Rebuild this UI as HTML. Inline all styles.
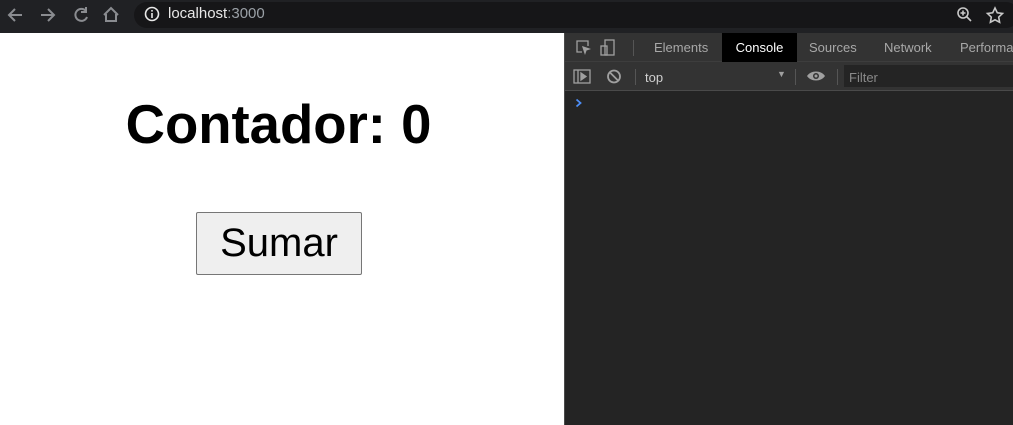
<!DOCTYPE html><html><head><style>
*{margin:0;padding:0;box-sizing:border-box}
body{width:1013px;height:425px;overflow:hidden;background:#fff;font-family:"Liberation Sans",sans-serif;position:relative}
.top{position:absolute;left:0;top:0;width:1013px;height:33px;background:#202124}
.pill{position:absolute;left:134px;top:2px;width:885px;height:26px;border-radius:13px;background:#161618}
.url{position:absolute;left:168px;top:5px;font-size:15px;color:#e8e8e8}
.url span{color:#9aa0a6}
.page{position:absolute;left:0;top:33px;width:564px;height:392px;background:#fff}
h1{position:absolute;left:0;width:557px;top:60px;text-align:center;font-size:54.5px;font-weight:bold;color:#000}
.btn{position:absolute;left:196px;top:179px;width:166px;height:63px;border:1px solid #767676;background:#efefef;font-size:40px;text-align:center;line-height:60px;border-radius:2px}
.dt{position:absolute;left:564px;top:33px;width:449px;height:392px;background:#242424;border-left:1px solid #4a4a4a}
.tabs{position:absolute;left:0;top:0;width:449px;height:29px;background:#333;border-bottom:1px solid #3d3d3d}
.tab{position:absolute;top:0;height:29px;line-height:29px;font-size:13px;color:#a8a8a8}
.tb{position:absolute;left:0;top:29px;width:449px;height:29px;background:#333;border-bottom:1px solid #4a4a4a}
</style></head><body>
<div class="top">
<svg style="position:absolute;left:0;top:0" width="130" height="33" fill="none" stroke="#8a8c90" stroke-width="2">
<path d="M22 15H9M15 9l-6 6 6 6"/><path d="M41 15h13M48 9l6 6-6 6"/>
<path d="M86 11a6 6 0 1 0 1 6M86 7v5h-5"/>
<path d="M104 15l7-7 7 7M106 14v7h10v-7"/></svg>
<div class="pill"></div>
<svg style="position:absolute;left:144px;top:6px" width="16" height="16"><circle cx="8" cy="8" r="6.5" fill="none" stroke="#e8e8e8" stroke-width="1.6"/><rect x="7.2" y="7" width="1.6" height="5" fill="#e8e8e8"/><rect x="7.2" y="4" width="1.6" height="1.6" fill="#e8e8e8"/></svg>
<div class="url">localhost<span>:3000</span></div>
<svg style="position:absolute;left:955px;top:6px" width="50" height="18" fill="none" stroke="#c8c8c8" stroke-width="1.6"><circle cx="8" cy="7" r="5"/><path d="M12 11l4 4M8 4.5v5M5.5 7h5"/><path d="M40 2l2.3 4.8 5.2.7-3.8 3.6.9 5.2-4.6-2.5-4.6 2.5.9-5.2-3.8-3.6 5.2-.7z"/></svg>
</div>
<div class="page"><h1>Contador: 0</h1><div class="btn">Sumar</div></div>
<div class="dt">
<div class="tabs">
<svg style="position:absolute;left:10px;top:6px" width="50" height="18" fill="none" stroke="#a0a0a0" stroke-width="1.3"><path d="M7 13H2V2h11v5"/><path d="M8 8l6 2-3 1-1 3z" fill="#a0a0a0"/><rect x="30" y="1" width="9" height="15"/><rect x="26" y="7" width="6" height="9"/></svg>
<div style="position:absolute;left:68px;top:7px;width:1px;height:16px;background:#555"></div>
<div class="tab" style="left:89px">Elements</div>
<div class="tab" style="left:157px;width:75px;background:#000;color:#fff;text-align:center">Console</div>
<div class="tab" style="left:244px">Sources</div>
<div class="tab" style="left:319px">Network</div>
<div class="tab" style="left:395px">Performa</div>
</div>
<div class="tb">
<svg style="position:absolute;left:8px;top:6px" width="50" height="18" fill="none" stroke="#a0a0a0" stroke-width="1.3"><rect x="1" y="2" width="16" height="13"/><path d="M5 2v13"/><path d="M8 5l5 3.5-5 3.5z" fill="#a0a0a0"/><circle cx="41" cy="8.5" r="6" stroke-width="1.8"/><path d="M37 4.5l8 8" stroke-width="1.8"/></svg>
<div style="position:absolute;left:70px;top:7px;width:1px;height:16px;background:#555"></div>
<div style="position:absolute;left:80px;top:8px;font-size:13px;color:#d0d0d0">top</div>
<div style="position:absolute;left:212px;top:7px;font-size:9px;color:#a0a0a0">▼</div>
<div style="position:absolute;left:230px;top:7px;width:1px;height:16px;background:#555"></div>
<svg style="position:absolute;left:241px;top:7px" width="20" height="14"><path d="M1 7C5 1 15 1 19 7C15 13 5 13 1 7z" fill="#a0a0a0"/><circle cx="10" cy="7" r="3" fill="#333"/><circle cx="10" cy="7" r="1.5" fill="#a0a0a0"/></svg>
<div style="position:absolute;left:272px;top:7px;width:1px;height:16px;background:#555"></div>
<div style="position:absolute;left:279px;top:3px;width:170px;height:22px;background:#242424"></div>
<div style="position:absolute;left:284px;top:8px;font-size:13px;color:#8a8a8a">Filter</div>
</div>
<svg style="position:absolute;left:10px;top:65px" width="8" height="10"><path d="M1.5 1.5l4 3.5-4 3.5" fill="none" stroke="#4d8ef7" stroke-width="1.8"/></svg>
</div>
</body></html>
